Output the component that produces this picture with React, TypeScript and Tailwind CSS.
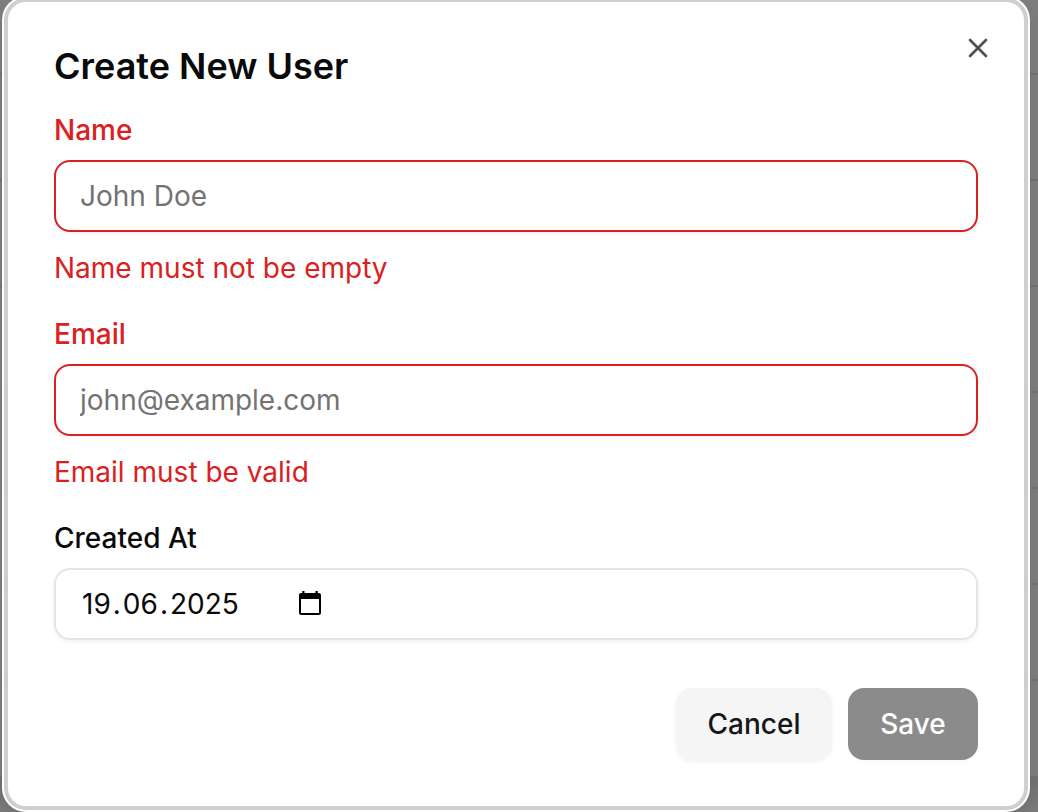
import type { ReactNode } from 'react';
import { X } from 'lucide-react';

const rowHeights = [75, 106, 106, 106, 96, 96, 96, 97];

function Backdrop() {
  return (
    <div className="flex h-full flex-col bg-[#7d7d7d]">
      {rowHeights.map((height, i) => (
        <div key={i} className="shrink-0 border-b-2 border-[#727272]" style={{ height }} />
      ))}
      <div className="flex-1 bg-linear-to-b from-[#727272] to-[#7b7b7b]" />
    </div>
  );
}

function Field({ label, error, children }: { label: string; error?: string; children: ReactNode }) {
  return (
    <div className="flex flex-col gap-4">
      <label className={`text-[28px] leading-[28px] font-medium ${error ? 'text-[#d92121]' : 'text-[#0a0a0a]'}`}>
        {label}
      </label>
      {children}
      {error && <p className="text-[28px] leading-10 text-[#d92121]">{error}</p>}
    </div>
  );
}

function TextInput({ placeholder }: { placeholder: string }) {
  return (
    <input
      placeholder={placeholder}
      className="h-[72px] w-full rounded-2xl border-2 border-[#d92121] bg-white px-6 text-[28px] shadow-[0_2px_4px_rgba(0,0,0,0.05)] outline-none placeholder:text-[#737373] placeholder:opacity-100"
    />
  );
}

function CalendarIcon() {
  return (
    <svg className="mb-0.5" width="24" height="24" viewBox="0 0 24 24" fill="#000">
      <path
        fillRule="evenodd"
        d="M4.2 0h2.3v2h11V0h2.3v2h1.2a2 2 0 0 1 2 2v18a2 2 0 0 1-2 2H3a2 2 0 0 1-2-2V4a2 2 0 0 1 2-2h1.2V0ZM3 8v14h18V8H3Z"
      />
    </svg>
  );
}

export default function App() {
  return (
    <div className="relative h-[812px] w-[1038px] overflow-hidden font-['Inter',sans-serif]">
      <Backdrop />
      <div
        role="dialog"
        className="absolute -top-0.5 left-1 flex h-[812px] w-[1024px] flex-col gap-8 rounded-[22px] border-4 border-[#cfcfcf] bg-white px-[46px] pt-[46px] pb-[46px] shadow-[0_0_0_2px_#fff,0_8px_16px_rgba(0,0,0,0.1)]"
      >
        <h2 className="text-[36px] leading-9 font-semibold text-[#0a0a0a]">Create New User</h2>
        <form className="flex flex-col gap-8">
          <Field label="Name" error="Name must not be empty">
            <TextInput placeholder="John Doe" />
          </Field>
          <Field label="Email" error="Email must be valid">
            <TextInput placeholder="john@example.com" />
          </Field>
          <Field label="Created At">
            <div className="flex h-[72px] items-center rounded-2xl border-2 border-[#e5e5e5] bg-white px-6 text-[28px] text-[#0a0a0a] shadow-[0_2px_4px_rgba(0,0,0,0.05)]">
              <div className="flex w-[218px]">
                <span className="px-0.5">19</span>
                <span>.</span>
                <span className="px-0.5">06</span>
                <span>.</span>
                <span className="px-0.5">2025</span>
              </div>
              <CalendarIcon />
            </div>
          </Field>
          <div className="mt-4 flex justify-end gap-4 text-[28px] font-medium">
            <button
              type="button"
              className="h-[72px] w-[156px] rounded-2xl bg-[#f5f5f5] text-[#171717] shadow-[0_2px_4px_rgba(0,0,0,0.05)]"
            >
              Cancel
            </button>
            <button
              type="button"
              className="h-[72px] w-[130px] rounded-2xl bg-[#8b8b8b] text-white shadow-[0_2px_4px_rgba(0,0,0,0.025)]"
            >
              Save
            </button>
          </div>
        </form>
        <button type="button" aria-label="Close" className="absolute top-[30px] right-[30px] text-[#505050]">
          <X size={32} />
        </button>
      </div>
    </div>
  );
}
